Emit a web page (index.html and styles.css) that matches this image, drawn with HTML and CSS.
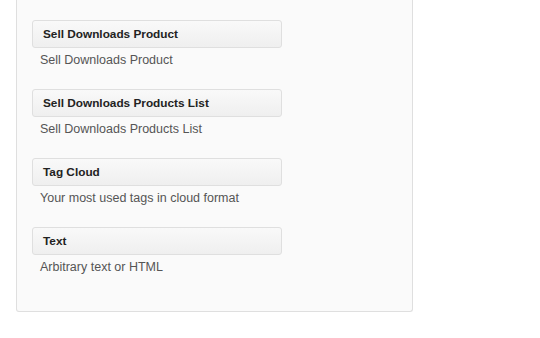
FILE: index.html
```html
<!DOCTYPE html>
<html>
<head>
<meta charset="utf-8">
<link rel="stylesheet" href="styles.css">
</head>
<body>
<div class="panel">
  <div class="widget">
    <div class="widget-top"><h4 class="widget-title">Sell Downloads Product</h4></div>
    <div class="widget-desc">Sell Downloads Product</div>
  </div>
  <div class="widget">
    <div class="widget-top"><h4 class="widget-title">Sell Downloads Products List</h4></div>
    <div class="widget-desc">Sell Downloads Products List</div>
  </div>
  <div class="widget">
    <div class="widget-top"><h4 class="widget-title">Tag Cloud</h4></div>
    <div class="widget-desc">Your most used tags in cloud format</div>
  </div>
  <div class="widget">
    <div class="widget-top"><h4 class="widget-title">Text</h4></div>
    <div class="widget-desc">Arbitrary text or HTML</div>
  </div>
</div>
</body>
</html>
```
FILE: styles.css
```css
html, body {
  margin: 0;
  padding: 0;
  background: #ffffff;
  font-family: "Liberation Sans", Arial, sans-serif;
}
.panel {
  margin-left: 16px;
  width: 380px;
  background: #fafafa;
  border: 1px solid #dfdfdf;
  border-top: none;
  border-radius: 0 0 3px 3px;
  padding: 20px 0 15px 15px;
  box-sizing: content-box;
  display: flex;
  flex-direction: column;
}
.widget {
  width: 250px;
  height: 69px;
  display: flex;
  flex-direction: column;
}
.widget-top {
  box-sizing: border-box;
  height: 28px;
  border: 1px solid #dfdfdf;
  border-radius: 3px;
  background: linear-gradient(to bottom, #f9f9f9, #efefef);
  display: flex;
  align-items: center;
  padding: 0 10px;
}
.widget-title {
  margin: 0;
  font-size: 11.8px;
  font-weight: bold;
  color: #222222;
}
.widget-desc {
  margin-top: 5px;
  padding-left: 8px;
  font-size: 12.5px;
  line-height: 15px;
  color: #555555;
}
```
